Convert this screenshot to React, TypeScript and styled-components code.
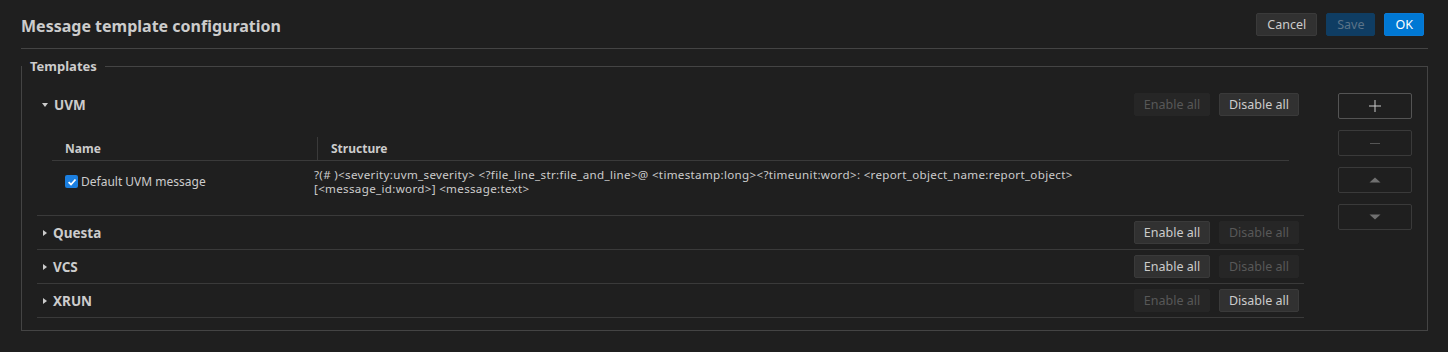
import React from "react";
import styled, { createGlobalStyle } from "styled-components";

const Global = createGlobalStyle`
  html, body { margin: 0; padding: 0; background: #1f1f1f; }
  body { font-family: "Noto Sans", "Open Sans", sans-serif; color: #cccccc; }
  * { box-sizing: border-box; }
`;

const Page = styled.div`
  padding: 0 20px 0 21px;
  height: 352px;
`;

const Header = styled.div`
  height: 49px;
  display: flex;
  align-items: center;
  justify-content: space-between;
  border-bottom: 1px solid #444444;
  padding-right: 4px;
`;

const Title = styled.h1`
  margin: 3px 0 0 0;
  font-size: 16px;
  font-weight: 700;
  color: #cccccc;
`;

const Actions = styled.div`
  display: flex;
  gap: 9px;
  align-items: center;
`;

type Variant = "secondary" | "primaryDim" | "primary";

const DialogButton = styled.button<{ $variant: Variant }>`
  height: 23px;
  padding: 0 10px;
  border-radius: 2px;
  font-family: inherit;
  font-size: 12.5px;
  border: 1px solid
    ${(p) =>
      p.$variant === "secondary" ? "#3a3a3a" : p.$variant === "primary" ? "#0a7ad4" : "#103d61"};
  background: ${(p) =>
    p.$variant === "secondary" ? "#313131" : p.$variant === "primary" ? "#0078d4" : "#0f3d63"};
  color: ${(p) =>
    p.$variant === "secondary" ? "#cccccc" : p.$variant === "primary" ? "#ffffff" : "#5b7388"};
`;

const Fieldset = styled.fieldset`
  margin: 8px 0 0 0;
  padding: 13px 15px 12px 15px;
  border: 1px solid #444444;
  width: 1407px;
`;

const Legend = styled.legend`
  margin-left: -15px;
  padding: 0 8px;
  font-size: 13px;
  font-weight: 700;
  color: #cccccc;
`;

const Body = styled.div`
  display: flex;
  gap: 34px;
  align-items: flex-start;
`;

const Groups = styled.div`
  flex: 1;
  display: flex;
  flex-direction: column;
`;

const Group = styled.div`
  border-bottom: 1px solid #3a3a3a;
`;

const GroupRow = styled.div`
  height: 33px;
  display: flex;
  align-items: center;
  padding: 0 5px;
  gap: 6px;
`;

const Caret = styled.span<{ $open?: boolean }>`
  width: 0;
  height: 0;
  ${(p) =>
    p.$open
      ? `border-left: 3.5px solid transparent; border-right: 3.5px solid transparent; border-top: 4px solid #cccccc; margin-top: 1px;`
      : `border-top: 3.5px solid transparent; border-bottom: 3.5px solid transparent; border-left: 4px solid #cccccc; margin-left: 1px;`}
`;

const GroupName = styled.span`
  font-size: 13.5px;
  font-weight: 700;
  color: #cccccc;
  flex: 1;
`;

const RowButtons = styled.div`
  display: flex;
  gap: 9px;
`;

const SmallButton = styled.button<{ $disabled?: boolean; $wide?: boolean }>`
  height: 23px;
  width: ${(p) => (p.$wide ? "80px" : "76px")};
  padding: 0;
  border-radius: 2px;
  font-family: inherit;
  font-size: 12.5px;
  border: 1px solid ${(p) => (p.$disabled ? "#262626" : "#3a3a3a")};
  background: ${(p) => (p.$disabled ? "#262626" : "#313131")};
  color: ${(p) => (p.$disabled ? "#585858" : "#cccccc")};
`;

const Table = styled.div`
  margin: 16px 15px 0 15px;
  display: grid;
  grid-template-columns: 265px 1fr;
`;

const HeadCell = styled.div<{ $divider?: boolean }>`
  height: 24px;
  display: flex;
  align-items: center;
  font-size: 12px;
  font-weight: 700;
  color: #cccccc;
  padding-left: 13px;
  border-bottom: 1px solid #3a3a3a;
  ${(p) => (p.$divider ? "border-left: 1px solid #3a3a3a;" : "")}
`;

const NameCell = styled.div`
  display: flex;
  align-items: flex-start;
  gap: 3px;
  height: 54px;
  padding: 14px 0 0 13px;
  font-size: 12px;
  line-height: 13px;
  color: #cccccc;
`;

const Check = styled.span`
  width: 13px;
  height: 13px;
  border-radius: 2px;
  background: #1b7fe0;
  display: inline-flex;
  align-items: center;
  justify-content: center;
  flex: none;
`;

const StructCell = styled.div`
  margin-left: -3px;
  padding: 7px 0 0 0;
  display: flex;
  flex-direction: column;
  gap: 1px;
`;

const StructLine = styled.div`
  font-size: 11.6px;
  letter-spacing: 0.32px;
  line-height: 13px;
  height: 13px;
  color: #cccccc;
  white-space: nowrap;
`;

const Side = styled.div`
  display: flex;
  flex-direction: column;
  gap: 11px;
  width: 74px;
  padding-top: 5px;
`;

const SideButton = styled.button<{ $active?: boolean }>`
  height: 26px;
  width: 74px;
  border-radius: 2px;
  background: transparent;
  border: 1px solid ${(p) => (p.$active ? "#545454" : "#3a3a3a")};
  display: flex;
  align-items: center;
  justify-content: center;
  padding: 0;
`;

const groups = [
  { name: "Questa", enable: true, disable: false },
  { name: "VCS", enable: true, disable: false },
  { name: "XRUN", enable: false, disable: true },
];

export default function App() {
  return (
    <>
      <Global />
      <Page>
        <Header>
          <Title>Message template configuration</Title>
          <Actions>
            <DialogButton $variant="secondary">Cancel</DialogButton>
            <DialogButton $variant="primaryDim">Save</DialogButton>
            <DialogButton $variant="primary">OK</DialogButton>
          </Actions>
        </Header>
        <Fieldset>
          <Legend>Templates</Legend>
          <Body>
            <Groups>
              <Group>
                <GroupRow>
                  <Caret $open />
                  <GroupName>UVM</GroupName>
                  <RowButtons>
                    <SmallButton $disabled>Enable all</SmallButton>
                    <SmallButton $wide>Disable all</SmallButton>
                  </RowButtons>
                </GroupRow>
                <Table>
                  <HeadCell>Name</HeadCell>
                  <HeadCell $divider>Structure</HeadCell>
                  <NameCell>
                    <Check>
                      <svg width="10" height="10" viewBox="0 0 10 10">
                        <path d="M1.6 5.2 L4 7.5 L8.5 2.5" fill="none" stroke="#fff" strokeWidth="1.8" />
                      </svg>
                    </Check>
                    Default UVM message
                  </NameCell>
                  <StructCell>
                    <StructLine>
                      ?(# )&lt;severity:uvm_severity&gt; &lt;?file_line_str:file_and_line&gt;@ &lt;timestamp:long&gt;&lt;?timeunit:word&gt;: &lt;report_object_name:report_object&gt;
                    </StructLine>
                    <StructLine>[&lt;message_id:word&gt;] &lt;message:text&gt;</StructLine>
                  </StructCell>
                </Table>
              </Group>
              {groups.map((g) => (
                <Group key={g.name}>
                  <GroupRow>
                    <Caret />
                    <GroupName>{g.name}</GroupName>
                    <RowButtons>
                      <SmallButton $disabled={!g.enable}>Enable all</SmallButton>
                      <SmallButton $wide $disabled={!g.disable}>Disable all</SmallButton>
                    </RowButtons>
                  </GroupRow>
                </Group>
              ))}
            </Groups>
            <Side>
              <SideButton $active>
                <svg width="14" height="14" viewBox="0 0 14 14">
                  <path d="M7 1 V13 M1 7 H13" stroke="#cccccc" strokeWidth="1" />
                </svg>
              </SideButton>
              <SideButton>
                <svg width="14" height="14" viewBox="0 0 14 14">
                  <path d="M2 7.5 H12" stroke="#555555" strokeWidth="1" />
                </svg>
              </SideButton>
              <SideButton>
                <svg width="12" height="8" viewBox="0 0 12 8">
                  <path d="M0.5 6.5 L6 1.5 L11.5 6.5 Z" fill="#707070" />
                </svg>
              </SideButton>
              <SideButton>
                <svg width="12" height="8" viewBox="0 0 12 8">
                  <path d="M0.5 1.5 L11.5 1.5 L6 6.5 Z" fill="#707070" />
                </svg>
              </SideButton>
            </Side>
          </Body>
        </Fieldset>
      </Page>
    </>
  );
}
